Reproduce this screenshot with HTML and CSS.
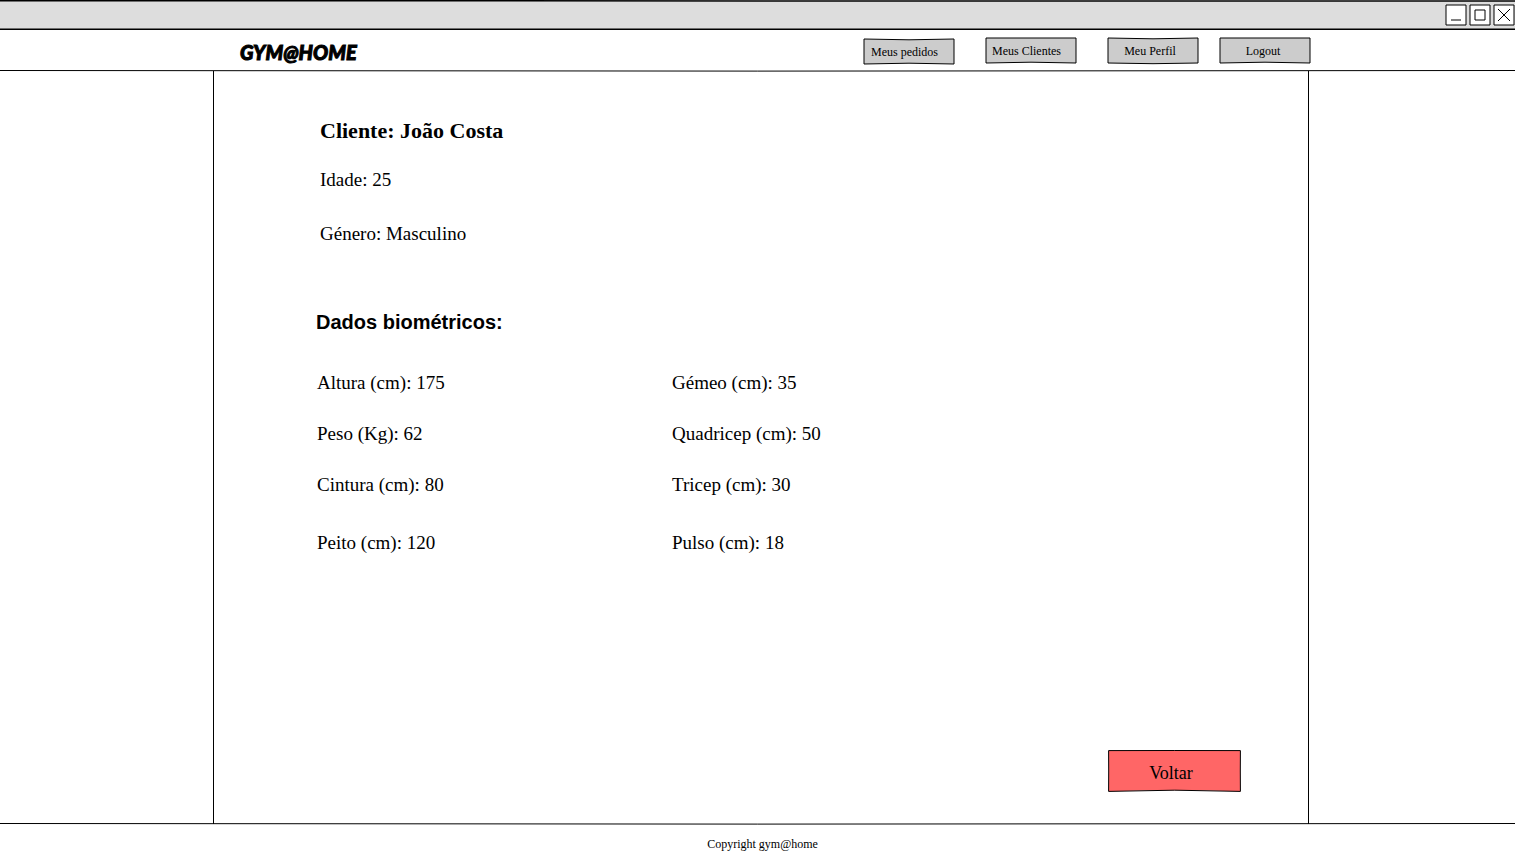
FILE: index.html
```html
<!DOCTYPE html>
<html lang="pt">
<head>
<meta charset="utf-8">
<meta name="viewport" content="width=device-width, initial-scale=1">
<title>Gym@Home</title>
<link rel="stylesheet" href="styles.css">
</head>
<body>
<div class="page">
  <div class="titlebar">
    <svg class="titlebar-frame" viewBox="0 0 1515 31" preserveAspectRatio="none" aria-hidden="true"><path d="M-2 .8Q757 0 1517 1V29.3Q757 30-2 29.2Z"/></svg>
    <button class="window-button" type="button" aria-label="Minimizar"><svg viewBox="0 0 22 22"><path d="M1 1H21V21H1ZM6 16H16"/></svg></button>
    <button class="window-button" type="button" aria-label="Maximizar"><svg viewBox="0 0 22 22"><path d="M1 1H21V21H1ZM6 6H16V16H6Z"/></svg></button>
    <button class="window-button" type="button" aria-label="Fechar"><svg viewBox="0 0 22 22"><path d="M1 1H21V21H1ZM5 5L17 17M17 5L5 17"/></svg></button>
  </div>
  <header class="header">
    <a class="logo" href="#">GYM@HOME</a>
    <nav class="nav">
      <button class="sketch-button nav-button nav-button-orders" type="button"><svg viewBox="0 0 92 27" preserveAspectRatio="none" aria-hidden="true"><path d="M1 1Q46 2.6 91 1V26Q46 24.4 1 26Z"/></svg><span>Meus pedidos</span></button>
      <button class="sketch-button nav-button" type="button"><svg viewBox="0 0 92 27" preserveAspectRatio="none" aria-hidden="true"><path d="M1 1H91V26Q46 24.4 1 26Z"/></svg><span>Meus Clientes</span></button>
      <button class="sketch-button nav-button nav-button-centered" type="button"><svg viewBox="0 0 92 27" preserveAspectRatio="none" aria-hidden="true"><path d="M1 1Q46 2.6 91 1V26Q46 27.4 1 26Z"/></svg><span>Meu Perfil</span></button>
      <button class="sketch-button nav-button nav-button-centered nav-button-logout" type="button"><svg viewBox="0 0 92 27" preserveAspectRatio="none" aria-hidden="true"><path d="M1 1H91V26Q46 24.4 1 26Z"/></svg><span>Logout</span></button>
    </nav>
  </header>
  <svg class="rule" viewBox="0 0 1515 2" preserveAspectRatio="none" aria-hidden="true"><path d="M0 .5Q757 1.7 1515 .5"/></svg>
  <main class="content">
    <section class="client">
      <h1 class="client-name">Cliente: João Costa</h1>
      <p class="client-age">Idade: 25</p>
      <p>Género: Masculino</p>
    </section>
    <h2 class="section-title">Dados biométricos:</h2>
    <div class="measures">
      <p>Altura (cm): 175</p><p>Gémeo (cm): 35</p>
      <p>Peso (Kg): 62</p><p>Quadricep (cm): 50</p>
      <p>Cintura (cm): 80</p><p>Tricep (cm): 30</p>
      <p class="measure-last">Peito (cm): 120</p><p class="measure-last">Pulso (cm): 18</p>
    </div>
    <button class="sketch-button back-button" type="button"><svg viewBox="0 0 134 43" preserveAspectRatio="none" aria-hidden="true"><path d="M.6 .6Q67 .4 132.4 .6Q132.2 21 132.4 41.4Q67 39 .6 41.4Q.8 21 .6 .6Z"/></svg><span>Voltar</span></button>
  </main>
  <svg class="rule" viewBox="0 0 1515 2" preserveAspectRatio="none" aria-hidden="true"><path d="M0 .5Q757 1.7 1515 .5"/></svg>
  <footer class="footer">Copyright gym@home</footer>
</div>
</body>
</html>
```
FILE: styles.css
```css
* {
  box-sizing: border-box;
}

body {
  margin: 0;
  background: #fff;
  color: #000;
  font-family: "Liberation Serif", "Times New Roman", serif;
  font-size: 19px;
  line-height: 24px;
}

h1, h2, p {
  margin: 0;
}

button {
  padding: 0;
  border: 0;
  background: none;
  color: inherit;
  font: inherit;
}

svg {
  display: block;
  overflow: visible;
  fill: none;
  stroke: #000;
  stroke-width: 1px;
}

path {
  vector-effect: non-scaling-stroke;
}

.page {
  display: flex;
  flex-direction: column;
  min-height: 100vh;
  overflow: hidden;
}

.titlebar {
  position: relative;
  display: flex;
  justify-content: flex-end;
  gap: 2px;
  height: 31px;
  padding-top: 4px;
}

.titlebar-frame {
  position: absolute;
  inset: 0;
  width: 100%;
  height: 100%;
  fill: #ddd;
  stroke-width: 1.5;
}

.window-button {
  position: relative;
  width: 22px;
  height: 22px;
}

.window-button svg {
  width: 22px;
  height: 22px;
  fill: #fff;
}

.header {
  display: flex;
  justify-content: space-between;
  align-items: flex-start;
  height: 39px;
  padding: 6px 204px 0 240px;
}

.logo {
  margin-top: 1px;
  color: #000;
  font: italic 900 20px/28px Lato, "Liberation Sans", sans-serif;
  text-decoration: none;
  -webkit-text-stroke: 1px #000;
}

.nav {
  display: flex;
  align-items: flex-start;
  gap: 30px;
}

.sketch-button {
  position: relative;
}

.sketch-button svg {
  position: absolute;
  inset: 0;
  width: 100%;
  height: 100%;
}

.sketch-button span {
  position: relative;
}

.nav-button {
  width: 92px;
  height: 27px;
  padding-left: 7px;
  font-size: 12px;
  text-align: left;
}

.nav-button svg {
  fill: #ccc;
}

.nav-button-orders {
  margin-top: 1px;
  padding-left: 8px;
}

.nav-button-centered {
  padding: 0 6px 0 0;
  text-align: center;
}

.nav-button-logout {
  margin-left: -10px;
  padding-right: 4px;
}

.rule {
  width: 100%;
  height: 2px;
}

.content {
  display: flex;
  flex: 1;
  flex-direction: column;
  margin: -1px 206px -1px 213px;
  padding: 48px 66px 31px 102px;
  border: solid #000;
  border-width: 0 1px;
}

.client {
  padding-left: 4px;
}

.client-name {
  font-size: 22px;
  line-height: 24px;
}

.client-age {
  margin: 25px 0 30px;
}

.section-title {
  margin: 64px 0 37px;
  font: 700 20px/24px "Liberation Sans", Arial, sans-serif;
}

.measures {
  display: grid;
  grid-template-columns: 355px 1fr;
  row-gap: 27px;
  padding-left: 1px;
}

.measure-last {
  margin-top: 7px;
}

.back-button {
  align-self: flex-end;
  width: 134px;
  height: 43px;
  margin-top: auto;
  padding: 2px 8px 0 0;
  font-size: 18px;
}

.back-button svg {
  fill: #f66;
}

.footer {
  height: 38px;
  padding: 7px 0 0 10px;
  font-size: 12px;
  text-align: center;
}
```
